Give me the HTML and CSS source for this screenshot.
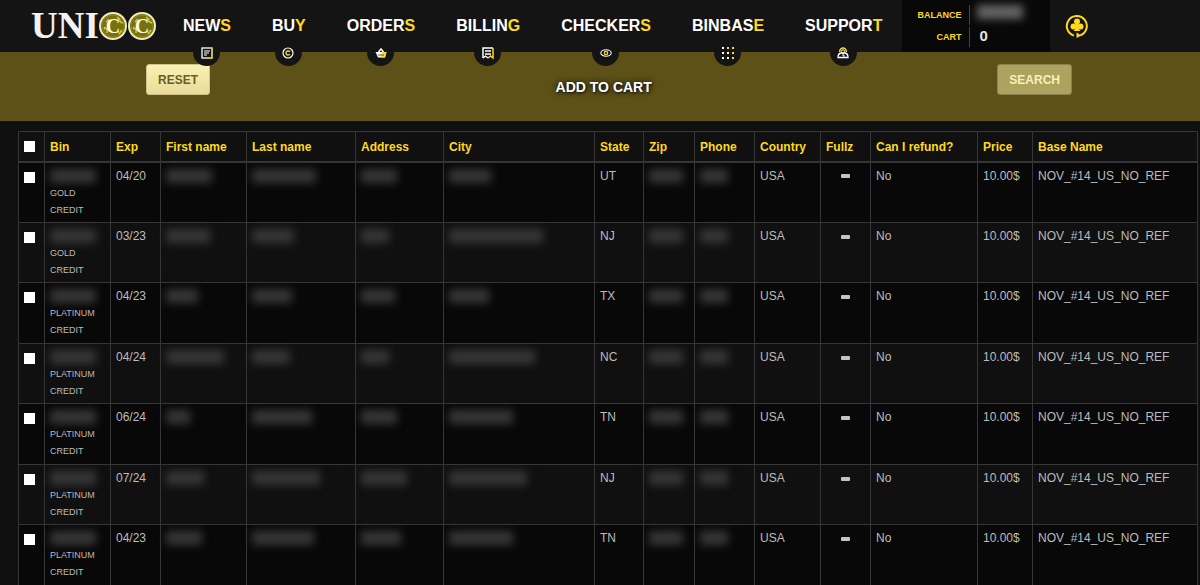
FILE: index.html
```
<!DOCTYPE html>
<html lang="en">
<head>
    <meta charset="UTF-8">
    <meta name="viewport" content="width=device-width, initial-scale=1.0">
    <title>UNICC</title>
    <link rel="stylesheet" href="styles.css">
</head>
<body>

    <!-- Header -->
    <header class="header">
        <a class="logo" href="#">
            <span>UNI</span>
            <svg class="coins" viewBox="0 0 58 30" aria-hidden="true">
                <g id="coin">
                    <circle cx="14" cy="15" r="13" fill="#77700f" stroke="#efe9bd" stroke-width="2"/>
                    <circle cx="14" cy="15" r="11" fill="none" stroke="#8f861c" stroke-width="1"/>
                    <path d="M5 18q4-2 3 4M20 7q0 4 4 5M7 11l3-3M20 23l3-4M5 16l3 2M18 6l3 3" fill="none" stroke="#d3c83c" stroke-width="1.5"/>
                    <text x="14" y="22" text-anchor="middle">C</text>
                </g>
                <use href="#coin" x="29"/>
            </svg>
        </a>
        <nav class="nav">
            <a href="#">NEW<b>S</b>
                <i><svg viewBox="0 0 14 14"><rect x="2" y="2" width="10" height="10" fill="none" stroke="#fff" stroke-width="1.3"/><path d="M12 2v10H6" fill="none" stroke="#d8b92c" stroke-width="1.3"/><path d="M4 5h6M4 7h5M4 9h3" stroke="#fff" stroke-width="1.2"/></svg></i>
            </a>
            <a href="#">BU<b>Y</b>
                <i><svg viewBox="0 0 14 14"><circle cx="7" cy="7" r="5" fill="none" stroke="#fff" stroke-width="1.2"/><path d="M9 6Q8.500 5 7 5 5 5 5 7t2 2q1.500 0 2-1" fill="none" stroke="#ffd91e" stroke-width="1.3"/></svg></i>
            </a>
            <a href="#">ORDER<b>S</b>
                <i><svg viewBox="0 0 14 14"><path d="M1.500 6h11L11 11.500H4z" fill="#fff"/><path d="M8 6h4.500L11 11.500H7z" fill="#ffd91e"/><path d="M4.500 6L7 3l2.500 3" fill="none" stroke="#fff" stroke-width="1.5"/><path d="M5 8v2M7 8v2M9 8v2" stroke="#141414" stroke-width=".7"/></svg></i>
            </a>
            <a href="#">BILLIN<b>G</b>
                <i><svg viewBox="0 0 14 14"><path d="M2 12V2h10" fill="none" stroke="#fff" stroke-width="1.5"/><path d="M12 2v10l-2.500-2L7 12" fill="none" stroke="#ffd91e" stroke-width="1.5"/><path d="M7 12l-2.500-2L2 12M4 5h6M4 8h6" fill="none" stroke="#fff" stroke-width="1.3"/></svg></i>
            </a>
            <a href="#">CHECKER<b>S</b>
                <i><svg viewBox="0 0 14 14"><ellipse cx="7" cy="7" rx="5.200" ry="3.300" fill="none" stroke="#fff" stroke-width="1.1"/><circle cx="7" cy="7" r="1.700" fill="none" stroke="#ffd91e" stroke-width="1.3"/></svg></i>
            </a>
            <a href="#">BINBAS<b>E</b>
                <i><svg viewBox="0 0 14 14"><path d="M1 1h2v2H1zM1 6h2v2H1zM1 11h2v2H1zM6 6h2v2H6zM6 11h2v2H6z" fill="#fff"/><path d="M6 1h2v2H6zM11 1h2v2h-2zM11 6h2v2h-2zM11 11h2v2h-2z" fill="#ffd91e"/></svg></i>
            </a>
            <a href="#">SUPPOR<b>T</b>
                <i><svg viewBox="0 0 14 14"><path d="M2 11.500q0-4 3-4.500h4q3 .5 3 4.500z" fill="none" stroke="#fff" stroke-width="1.3"/><path d="M3.500 6Q4 2 7 2t3.500 4" fill="none" stroke="#ffd91e" stroke-width="1.3"/><circle cx="7" cy="5.500" r="1.700" fill="none" stroke="#fff"/><path d="M6 9h2v2" fill="none" stroke="#fff"/></svg></i>
            </a>
        </nav>
        <dl class="account">
            <dt>BALANCE</dt>
            <dd><span class="mask mask-balance"></span></dd>
            <dt>CART</dt>
            <dd>0</dd>
        </dl>
        <a class="profile" href="#" aria-label="Profile">
            <svg viewBox="0 0 24 24">
                <path d="M9 21.600A10 10 0 1 1 15.500 21.300" fill="none" stroke="#ffd91e" stroke-width="2"/>
                <path d="M11.500 18.500l5 3-5 2.500z" fill="#ffd91e"/>
                <circle cx="12" cy="7.500" r="3" fill="#ffd91e"/>
                <circle cx="8.500" cy="12.500" r="3" fill="#ffd91e"/>
                <circle cx="15.500" cy="12.500" r="3" fill="#ffd91e"/>
                <path d="M11 8h2l.5 6.500 2 2.500h-7l2-2.500z" fill="#ffd91e"/>
            </svg>
        </a>
    </header>

    <!-- Actions -->
    <section class="toolbar">
        <button type="reset" class="btn btn-reset">RESET</button>
        <button type="button" class="add">ADD TO CART</button>
        <button type="submit" class="btn btn-search">SEARCH</button>
    </section>

    <!-- Results -->
    <main>
        <table>
            <colgroup>
                <col class="c-check"><col class="c-bin"><col class="c-exp"><col class="c-first"><col class="c-last">
                <col class="c-address"><col class="c-city"><col class="c-state"><col class="c-zip"><col class="c-phone">
                <col class="c-country"><col class="c-fullz"><col class="c-refund"><col class="c-price"><col>
            </colgroup>
            <thead>
                <tr>
                    <th><input type="checkbox" aria-label="Select all"></th>
                    <th>Bin</th>
                    <th>Exp</th>
                    <th>First name</th>
                    <th>Last name</th>
                    <th>Address</th>
                    <th>City</th>
                    <th>State</th>
                    <th>Zip</th>
                    <th>Phone</th>
                    <th>Country</th>
                    <th>Fullz</th>
                    <th>Can I refund?</th>
                    <th>Price</th>
                    <th>Base Name</th>
                </tr>
            </thead>
            <tbody id="rows"></tbody>
        </table>
    </main>

    <script src="script.js"></script>
</body>
</html>
```
FILE: styles.css
```
/* Color scheme */
:root {
    --bg: #101010;
    --header: #141414;
    --dark: #080808;
    --olive: #5d5117;
    --yellow: #ffd91e;
    --line: #363636;
    --text: #bcbcbc;
}

* {
    margin: 0;
    padding: 0;
    box-sizing: border-box;
}

body {
    font-family: "Liberation Sans", Arial, sans-serif;
    font-size: 12px;
    background-color: var(--bg);
    color: var(--text);
    overflow-x: hidden;
}

/* Header */
.header {
    display: flex;
    align-items: center;
    height: 52px;
    background: var(--header);
}

.logo {
    display: flex;
    align-items: center;
    width: 152px;
    margin-left: 31px;
    font: bold 37px/52px "Liberation Serif", serif;
    color: #f2f2f2;
    text-decoration: none;
}

.coins {
    flex: none;
    width: 58px;
    height: 30px;
}

.coins text {
    font: bold 20px "Liberation Serif", serif;
    fill: #fffce0;
}

.nav {
    display: flex;
    gap: 41px;
}

.nav a {
    position: relative;
    font-size: 16px;
    font-weight: bold;
    line-height: 52px;
    color: #fff;
    text-decoration: none;
}

.nav b {
    color: var(--yellow);
}

/* round tab hanging under each menu item */
.nav i {
    position: absolute;
    left: 50%;
    bottom: -14px;
    width: 27px;
    height: 27px;
    margin-left: -14px;
    display: flex;
    align-items: center;
    justify-content: center;
    border-radius: 50%;
    background: var(--header);
}

.nav svg {
    width: 14px;
    height: 14px;
}

.account {
    display: grid;
    grid-template-columns: 68px 1fr;
    align-content: center;
    row-gap: 2px;
    width: 148px;
    height: 52px;
    margin-left: 20px;
    background: var(--dark);
}

.account dt {
    padding-right: 8px;
    border-right: 1px solid #444;
    font-size: 9px;
    font-weight: bold;
    line-height: 20px;
    text-align: right;
    color: var(--yellow);
}

.account dd {
    padding-left: 9px;
    font-size: 15px;
    font-weight: bold;
    line-height: 18px;
    color: #e4e4e4;
}

.profile {
    width: 24px;
    height: 24px;
    margin-left: 15px;
}

/* Toolbar */
.toolbar {
    display: flex;
    align-items: flex-start;
    justify-content: space-between;
    height: 69px;
    padding: 12px 128px 0 146px;
    background: var(--olive);
}

.btn {
    height: 31px;
    padding: 0 11px;
    border: 1px solid #cfc58b;
    border-radius: 3px;
    font: bold 12px "Liberation Sans", Arial, sans-serif;
}

.btn-reset {
    background: linear-gradient(#faf0b4, #e9dc9b);
    color: #6b5e20;
}

.btn-search {
    background: #ada35f;
    border-color: #86834c;
    color: #faf0b4;
}

.add {
    margin-top: 12px;
    border: 0;
    background: none;
    font: bold 14px/22px "Liberation Sans", Arial, sans-serif;
    color: #fff;
    text-shadow: 0 0 6px #000, 1px 1px 2px #222;
}

/* Table */
main {
    height: calc(100vh - 121px);
    padding: 10px 2px 0 18px;
    overflow: hidden;
}

table {
    width: 100%;
    table-layout: fixed;
    border-collapse: collapse;
}

th, td {
    border: 1px solid var(--line);
    padding: 4px 0 3px 5px;
    line-height: 18px;
    text-align: left;
    vertical-align: top;
    white-space: nowrap;
}

th {
    height: 30px;
    padding: 1px 0 0 5px;
    border-bottom: 2px solid var(--line);
    font-size: 12px;
    vertical-align: middle;
    color: var(--yellow);
}

tbody tr:nth-child(odd) {
    height: 61px;
    background: var(--dark);
}

input {
    appearance: none;
    display: block;
    width: 11px;
    height: 11px;
    background: #fff;
}

input:checked {
    border: 3px solid #fff;
    background: #222;
}

td input {
    margin-top: 5px;
}

small {
    display: block;
    font-size: 9px;
    line-height: 17px;
}

.dash {
    padding-left: 0;
    text-align: center;
}

.dash span {
    display: inline-block;
    width: 9px;
    height: 4px;
    border-radius: 1px;
    background: #c4c4c4;
    vertical-align: middle;
}

/* blurred out values */
.mask {
    display: block;
    height: 14px;
    margin-top: 2px;
    background: #363636;
    filter: blur(4px);
}

.mask-balance {
    width: 46px;
    margin: 0 0 0 -2px;
    background: #666;
}

td .mask {
    margin-bottom: 2px;
}

.c-check { width: 26px; }
.c-bin { width: 66px; }
.c-exp { width: 50px; }
.c-first { width: 86px; }
.c-last { width: 109px; }
.c-address { width: 88px; }
.c-city { width: 151px; }
.c-state { width: 49px; }
.c-zip { width: 51px; }
.c-phone { width: 60px; }
.c-country { width: 66px; }
.c-fullz { width: 50px; }
.c-refund { width: 107px; }
.c-price { width: 55px; }
```
FILE: script.js
```
// level, exp, state, widths of the blurred values (first, last, address, city)
const rows = [
    ['GOLD', '04/20', 'UT', 46, 64, 36, 42],
    ['GOLD', '03/23', 'NJ', 44, 42, 28, 94],
    ['PLATINUM', '04/23', 'TX', 32, 40, 34, 40],
    ['PLATINUM', '04/24', 'NC', 58, 38, 28, 86],
    ['PLATINUM', '06/24', 'TN', 24, 60, 36, 64],
    ['PLATINUM', '07/24', 'NJ', 38, 68, 46, 78],
    ['PLATINUM', '04/23', 'TN', 36, 62, 40, 64],
];

const mask = width => `<span class="mask" style="width: ${width}px"></span>`;

document.getElementById('rows').innerHTML = rows.map(([level, exp, state, first, last, address, city]) => `
    <tr>
        <td><input type="checkbox" aria-label="Select row"></td>
        <td>${mask(46)}<small>${level}</small><small>CREDIT</small></td>
        <td>${exp}</td>
        <td>${mask(first)}</td>
        <td>${mask(last)}</td>
        <td>${mask(address)}</td>
        <td>${mask(city)}</td>
        <td>${state}</td>
        <td>${mask(34)}</td>
        <td>${mask(28)}</td>
        <td>USA</td>
        <td class="dash"><span></span></td>
        <td>No</td>
        <td>10.00$</td>
        <td>NOV_#14_US_NO_REF</td>
    </tr>`).join('');
```
